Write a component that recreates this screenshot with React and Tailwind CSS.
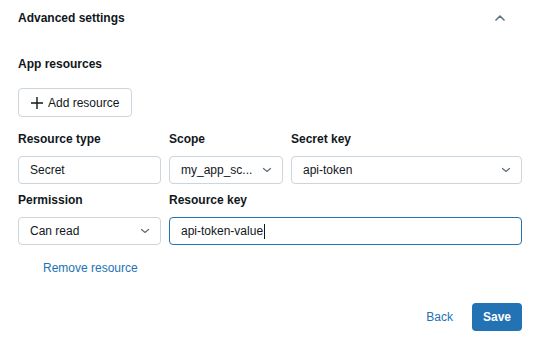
import React from "react";

const Chevron = ({ up }) => (
  <svg width="10" height="6" viewBox="0 0 10 6" fill="none">
    {up ? (
      <path d="M1 5L5 1L9 5" stroke="#5f7281" strokeWidth="1.6" strokeLinecap="round" strokeLinejoin="round" />
    ) : (
      <path d="M1.5 1.5L5 4.5L8.5 1.5" stroke="#5f7281" strokeWidth="1.2" strokeLinecap="round" strokeLinejoin="round" />
    )}
  </svg>
);

const Select = ({ value, className = "" }) => (
  <div className={"flex h-[28px] items-center justify-between rounded-[4px] border border-[#cbd5dd] bg-white pl-[11px] pr-[10px] " + className}>
    <span className="text-[12px] text-[#11171c]">{value}</span>
    <Chevron />
  </div>
);

const Label = ({ children }) => (
  <div className="text-[12px] font-bold text-[#11171c] leading-[16px]">{children}</div>
);

export default function App() {
  return (
    <div className="w-[540px] h-[351px] bg-white px-[18px] pt-[10px]" style={{ fontFamily: '"Liberation Sans", Arial, sans-serif' }}>
      <div className="flex h-[16px] items-center justify-between pr-[17px]">
        <div className="text-[12px] font-bold text-[#11171c]">Advanced settings</div>
        <Chevron up />
      </div>
      <div className="mt-[30px] text-[12px] font-bold text-[#11171c] leading-[16px]">App resources</div>
      <div className="mt-[16px] flex">
        <button className="flex h-[29px] w-[114px] items-center gap-[4px] rounded-[4px] border border-[#cbd5dd] bg-white pl-[11px] text-[12px] text-[#11171c]">
          <svg width="14" height="14" viewBox="0 0 14 14" fill="none">
            <path d="M7 1V13M1 7H13" stroke="#11171c" strokeWidth="1.4" />
          </svg>
          Add resource
        </button>
      </div>
      <div className="mt-[14px] grid grid-cols-[143px_114px_231px] gap-x-[8px]">
        <Label>Resource type</Label>
        <Label>Scope</Label>
        <Label>Secret key</Label>
      </div>
      <div className="mt-[9px] grid grid-cols-[143px_114px_231px] gap-x-[8px]">
        <div className="flex h-[28px] items-center rounded-[4px] border border-[#cbd5dd] bg-white pl-[11px] text-[12px] text-[#11171c]">Secret</div>
        <Select value="my_app_sc..." />
        <Select value="api-token" />
      </div>
      <div className="mt-[8px] grid grid-cols-[143px_353px] gap-x-[8px]">
        <Label>Permission</Label>
        <Label>Resource key</Label>
      </div>
      <div className="mt-[9px] grid grid-cols-[143px_353px] gap-x-[8px]">
        <Select value="Can read" />
        <div className="flex h-[28px] items-center rounded-[4px] border border-[#2272b4] bg-white pl-[11px] text-[12px] text-[#11171c]">
          api-token-value<span className="ml-[1px] inline-block h-[15px] w-[1px] bg-[#11171c]" />
        </div>
      </div>
      <div className="mt-[15px] pl-[25px] text-[12px] leading-[16px] text-[#2272b4]">Remove resource</div>
      <div className="mt-[27px] flex items-center justify-end gap-[19px]">
        <span className="text-[12px] text-[#2272b4]">Back</span>
        <button className="h-[28px] w-[50px] rounded-[4px] bg-[#2272b4] text-[12px] font-bold text-white">Save</button>
      </div>
    </div>
  );
}
